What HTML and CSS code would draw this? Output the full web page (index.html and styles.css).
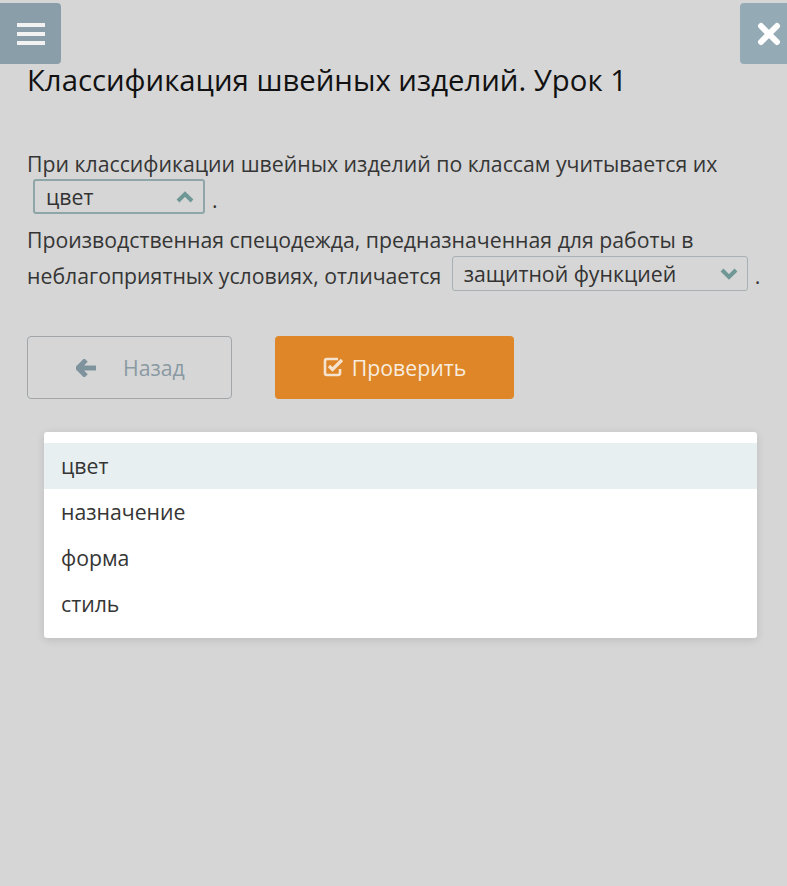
FILE: index.html
```html
<!DOCTYPE html>
<html lang="ru">
<head>
    <meta charset="UTF-8">
    <meta name="viewport" content="width=device-width, initial-scale=1.0">
    <title>Классификация швейных изделий</title>
    <link rel="stylesheet" href="styles.css">
</head>
<body>
    <div class="topbar">
        <div class="menu-btn">
            <svg width="28" height="22" viewBox="0 0 28 22"><rect x="0" y="0" width="28" height="4" fill="#f2f2f2"/><rect x="0" y="9" width="28" height="4" fill="#f2f2f2"/><rect x="0" y="18" width="28" height="4" fill="#f2f2f2"/></svg>
        </div>
        <div class="close-btn">
            <svg width="24" height="24" viewBox="0 0 24 24"><path d="M4 4 L20 20 M20 4 L4 20" stroke="#fff" stroke-width="6" stroke-linecap="round"/></svg>
        </div>
    </div>

    <div class="container">
        <h1>Классификация швейных изделий. Урок 1</h1>

        <p class="task">При классификации швейных изделий по классам учитывается их
            <span class="blank"><span class="select select-open select-short"><span class="value">цвет</span><svg class="chev" width="20" height="14" viewBox="0 0 20 14"><path d="M3 11 L10 4 L17 11" fill="none" stroke="#6f9796" stroke-width="4"/></svg></span><span class="dot">.</span></span>
        </p>
        <p class="task">Производственная спецодежда, предназначенная для работы в неблагоприятных условиях, отличается
            <span class="blank"><span class="select select-long"><span class="value">защитной функцией</span><svg class="chev" width="20" height="14" viewBox="0 0 20 14"><path d="M3 3 L10 10 L17 3" fill="none" stroke="#6f9796" stroke-width="4"/></svg></span><span class="dot">.</span></span>
        </p>

        <div class="actions">
            <button class="btn btn-back">
                <svg width="22" height="18" viewBox="0 0 22 18"><path d="M10 1 L2 9 L10 17 M3 9 H20" fill="none" stroke="#7f939e" stroke-width="5" stroke-linejoin="round"/></svg>
                <span>Назад</span>
            </button>
            <button class="btn btn-check">
                <svg width="21" height="20" viewBox="0 0 21 20"><path d="M15 2 H4 Q2 2 2 4 V16 Q2 18 4 18 H15 Q17 18 17 16 V12" fill="none" stroke="#f6e3cf" stroke-width="2.6"/><path d="M6 9 L9.5 12.5 L19 3" fill="none" stroke="#f6e3cf" stroke-width="3.2"/></svg>
                <span>Проверить</span>
            </button>
        </div>
    </div>

    <ul class="dropdown">
        <li class="active">цвет</li>
        <li>назначение</li>
        <li>форма</li>
        <li>стиль</li>
    </ul>
</body>
</html>
```

FILE: styles.css
```css
body {
    margin: 0;
    background-color: #d6d6d6;
    font-family: 'Open Sans', 'Noto Sans', Arial, sans-serif;
    color: #353535;
    position: relative;
    min-height: 886px;
}
.topbar {
    display: flex;
    justify-content: space-between;
    padding-top: 3px;
    height: 61px;
}
.menu-btn, .close-btn {
    width: 61px;
    height: 61px;
    border-radius: 4px;
    display: flex;
    align-items: center;
    justify-content: center;
}
.menu-btn {
    background-color: #8a9ea9;
    border-top-left-radius: 0;
    border-bottom-left-radius: 0;
}
.close-btn {
    background-color: #94abb6;
    width: 47px;
    justify-content: flex-start;
    padding-left: 17px;
    box-sizing: border-box;
    border-top-right-radius: 0;
    border-bottom-right-radius: 0;
}
.container {
    padding: 0 8px 0 27px;
}
h1 {
    margin: -2px 0 48px;
    font-size: 29.3px;
    font-weight: 400;
    color: #111;
    line-height: 36px;
}
.task {
    margin: 0;
    font-size: 21.25px;
    line-height: 36px;
}
.task + .task {
    margin-top: 4px;
}
.blank {
    white-space: nowrap;
}
.select {
    display: inline-flex;
    align-items: center;
    justify-content: space-between;
    box-sizing: border-box;
    height: 35px;
    padding: 0 8px 0 11px;
    border: 2px solid #8ea6a8;
    border-radius: 3px;
    vertical-align: top;
    position: relative;
    top: -3px;
    color: #333;
    line-height: 30px;
}
.select-short {
    width: 172px;
    margin-left: 6px;
}
.select-long {
    width: 296px;
    margin-left: 5px;
    border-width: 1px;
    border-color: #a8b2b4;
    top: -2px;
}
.dot {
    margin-left: 7px;
}
.actions {
    display: flex;
    gap: 43px;
    margin-top: 42px;
}
.btn {
    height: 63px;
    border-radius: 4px;
    font-family: inherit;
    font-size: 21.25px;
    display: flex;
    align-items: center;
    cursor: pointer;
}
.btn-back {
    width: 205px;
    background: transparent;
    border: 1px solid #a2a6a8;
    color: #8a9aa3;
    padding-left: 48px;
    gap: 25px;
}
.btn-check {
    width: 239px;
    background-color: #df8628;
    border: none;
    color: #f7ecdf;
    justify-content: center;
    gap: 8px;
}
.btn-check svg {
    position: relative;
    top: -1px;
}
.dropdown {
    position: absolute;
    top: 432px;
    left: 44px;
    width: 713px;
    margin: 0;
    padding: 11px 0;
    list-style: none;
    background-color: #fff;
    border-radius: 3px;
    box-shadow: 0 2px 8px rgba(0,0,0,0.12);
}
.dropdown li {
    height: 46px;
    line-height: 46px;
    padding-left: 17px;
    font-size: 21.25px;
    color: #353535;
}
.dropdown li.active {
    background-color: #e8eff1;
}
```
